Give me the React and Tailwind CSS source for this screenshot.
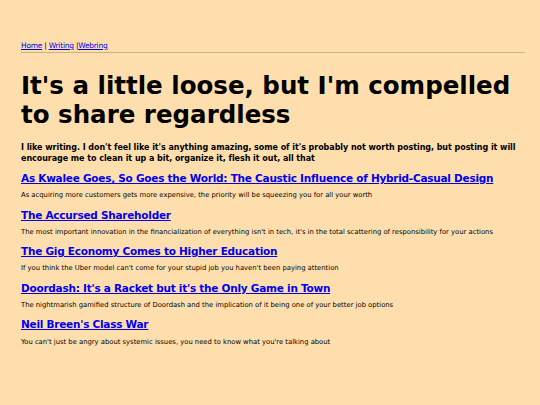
export default function App() {
  const posts = [
    ["As Kwalee Goes, So Goes the World: The Caustic Influence of Hybrid-Casual Design", "As acquiring more customers gets more expensive, the priority will be squeezing you for all your worth"],
    ["The Accursed Shareholder", "The most important innovation in the financialization of everything isn't in tech, it's in the total scattering of responsibility for your actions"],
    ["The Gig Economy Comes to Higher Education", "If you think the Uber model can't come for your stupid job you haven't been paying attention"],
    ["Doordash: It's a Racket but it's the Only Game in Town", "The nightmarish gamified structure of Doordash and the implication of it being one of your better job options"],
    ["Neil Breen's Class War", "You can't just be angry about systemic issues, you need to know what you're talking about"],
  ];
  return (
    <div className="min-h-[405px] w-[540px] bg-[#ffdead] pl-[21px] pr-[15px] pt-[41px] text-black" style={{ fontFamily: '"DejaVu Sans", Verdana, sans-serif' }}>
      <nav className="text-[7.5px] leading-[10px] tracking-[-0.25px]">
        <a href="#" className="text-[#0000ee] underline">Home</a> | <a href="#" className="text-[#0000ee] underline">Writing</a> |<a href="#" className="text-[#0000ee] underline">Webring</a>
      </nav>
      <div className="mt-[1px] h-px bg-[#c8b089]" />
      <h1 className="mt-[18px] text-[24.5px] font-bold leading-[29px]">It's a little loose, but I'm compelled to share regardless</h1>
      <p className="mt-[13px] text-[8px] font-bold leading-[11px] tracking-[-0.05px]">I like writing. I don't feel like it's anything amazing, some of it's probably not worth posting, but posting it will encourage me to clean it up a bit, organize it, flesh it out, all that</p>
      <div className="mt-[7px] flex flex-col">
        {posts.map(([t, d]) => (
          <div key={t} className="flex flex-col">
            <a href="#" className="text-[10.5px] font-bold leading-[14px] tracking-[-0.25px] text-[#0000ee] underline">{t}</a>
            <p className="mt-[6.3px] mb-[7.3px] text-[6.8px] leading-[9px]">{d}</p>
          </div>
        ))}
      </div>
    </div>
  );
}
